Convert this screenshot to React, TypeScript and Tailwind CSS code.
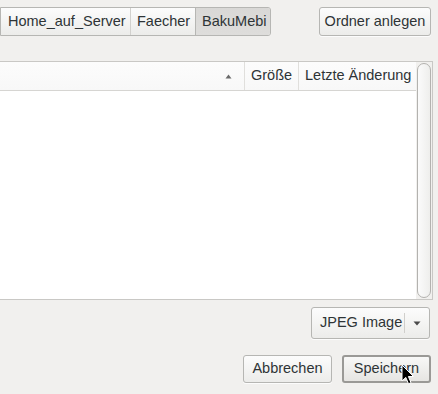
import React from "react";

const btn =
  "flex items-center rounded-[3px] border border-[#b6b6b3] bg-gradient-to-b from-[#fcfcfc] to-[#ececea] text-[#2e3436] shadow-[0_1px_0_rgba(255,255,255,0.8)]";

export default function App() {
  return (
    <div
      className="relative w-[438px] h-[394px] overflow-hidden bg-[#f1f0ee] text-[14.5px] text-[#2e3436]"
      style={{ fontFamily: '"Liberation Sans", Arial, sans-serif' }}
    >
      {/* top bar */}
      <div className="flex items-start justify-between pt-[7px] pr-[7px]">
        <div className="flex h-[29px] rounded-r-[3px] border border-[#b6b6b3] overflow-hidden">
          <div className="flex items-center pl-[7px] w-[130px] bg-gradient-to-b from-[#fcfcfc] to-[#ececea] border-r border-[#d2d1ce] whitespace-nowrap">
            Home_auf_Server
          </div>
          <div className="flex items-center pl-[6px] w-[65px] bg-gradient-to-b from-[#fcfcfc] to-[#ececea] border-r border-[#b6b6b3]">
            Faecher
          </div>
          <div className="flex items-center pl-[6px] w-[74px] bg-gradient-to-b from-[#d9d8d6] to-[#dedddb]">
            BakuMebi
          </div>
        </div>
        <div className={btn + " h-[29px] w-[112px] justify-center whitespace-nowrap"}>Ordner anlegen</div>
      </div>

      {/* file list */}
      <div className="mt-[25px] mr-[5px] -ml-px flex h-[239px] border border-[#c9c8c5] bg-white">
        <div className="flex-1 flex flex-col">
          <div className="flex h-[29px] border-b border-[#d6d5d2] bg-gradient-to-b from-[#fcfcfc] to-[#f8f8f8]">
            <div className="flex-1 flex items-center justify-end pr-[12px]">
              <svg width="7" height="5" viewBox="0 0 7 5">
                <path d="M3.5 0.5 L6.5 4.5 L0.5 4.5 Z" fill="#6a6a6a" />
              </svg>
            </div>
            <div className="w-[54px] flex items-center pl-[6px] border-l border-[#e0dfdc]">Größe</div>
            <div className="w-[118px] flex items-center pl-[6px] border-l border-[#e0dfdc] whitespace-nowrap">Letzte Änderung</div>
          </div>
          <div className="flex-1 bg-white" />
        </div>
        <div className="w-[16px] py-px pl-px pr-[1px] bg-[#f1f0ee]">
          <div className="h-full w-[14px] rounded-[7px] border border-[#b3b2af] bg-gradient-to-r from-[#fbfbfb] to-[#eeeeec]" />
        </div>
      </div>

      {/* file type */}
      <div className="flex justify-end pr-[8px] mt-[7px]">
        <div className={btn + " h-[32px] w-[119px]"}>
          <span className="pl-[8px] flex-1 whitespace-nowrap">JPEG Image</span>
          <div className="h-[20px] border-l border-[#d0cfcc]" />
          <div className="w-[24px] flex justify-center">
            <svg width="8" height="5" viewBox="0 0 8 5">
              <path d="M0.5 0.5 L7.5 0.5 L4 4.5 Z" fill="#4a4a4a" />
            </svg>
          </div>
        </div>
      </div>

      {/* actions */}
      <div className="flex justify-end gap-[10px] pr-[7px] mt-[16px]">
        <div className={btn + " h-[28px] w-[89px] justify-center"}>Abbrechen</div>
        <div className="h-[28px] w-[89px] rounded-[3px] border-2 border-[#9a9996] bg-gradient-to-b from-[#f8f8f7] to-[#e6e5e2] flex items-center justify-center text-[#2e3436]">
          Speichern
        </div>
      </div>

      {/* mouse cursor */}
      <svg className="absolute left-[401px] top-[364px]" width="14" height="22" viewBox="0 0 14 22">
        <path
          d="M1 1 L1 17 L4.8 13.4 L7.5 19.8 L10 18.7 L7.4 12.5 L12.5 12.5 Z"
          fill="#000"
          stroke="#fff"
          strokeWidth="1"
          strokeLinejoin="round"
        />
      </svg>
    </div>
  );
}
